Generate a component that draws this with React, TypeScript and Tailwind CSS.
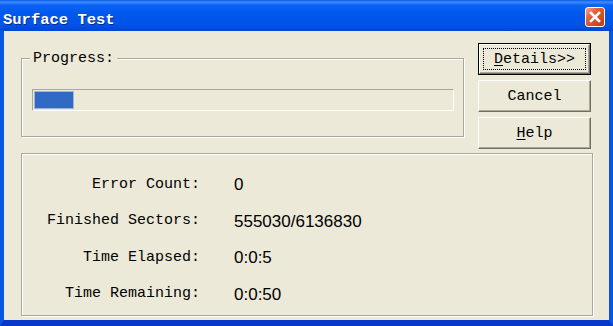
const mono = "font-['Liberation_Mono','Courier_New',monospace]"

interface BtnProps {
  label: string
  hotkey?: number
  isDefault?: boolean
}

const Btn = ({ label, hotkey, isDefault }: BtnProps) => {
  const text =
    hotkey === undefined ? (
      label
    ) : (
      <>
        {label.slice(0, hotkey)}
        <span className="underline underline-offset-2">{label[hotkey]}</span>
        {label.slice(hotkey + 1)}
      </>
    )

  const face = (
    <div className="relative flex h-full w-full items-center justify-center border border-t-white border-l-white border-r-[#716F64] border-b-[#716F64] bg-[#ECE9D8] shadow-[inset_-1px_-1px_0_#ACA899] leading-[18px]">
      {isDefault && <div className="absolute inset-[3px] border border-dotted border-black"></div>}
      <span className="pt-[2px]">{text}</span>
    </div>
  )

  if (isDefault) {
    return <div className="h-[32px] w-[113px] border border-black">{face}</div>
  }
  return <div className="h-[32px] w-[113px]">{face}</div>
}

const rows = [
  ['Error Count:', '0'],
  ['Finished Sectors:', '555030/6136830'],
  ['Time Elapsed:', '0:0:5'],
  ['Time Remaining:', '0:0:50'],
]

export default function App() {
  return (
    <div className={`flex h-[326px] w-[613px] flex-col overflow-hidden bg-[#0055E5] text-[15px] text-black ${mono}`}>
      {/* title bar */}
      <div className="flex h-[31px] items-center justify-between bg-[linear-gradient(to_bottom,#0A5CE8_0%,#3D8DFF_7%,#0A63F6_16%,#0057EC_45%,#0054E6_80%,#0046D0_100%)] pl-[3px] pr-[8px]">
        <span className="mt-[8px] text-[15.5px] font-bold leading-[18px] text-white [text-shadow:1px_1px_0_#0B2A8F]">Surface Test</span>
        <div className="mt-[2px] flex h-[20px] w-[20px] items-center justify-center rounded-[3px] border border-white bg-[linear-gradient(135deg,#F3A58A_0%,#E2603A_35%,#D44A22_70%,#B8361A_100%)]">
          <svg width="12" height="12" viewBox="0 0 12 12">
            <path d="M2 2 L10 10 M10 2 L2 10" stroke="#fff" strokeWidth="2.6" strokeLinecap="square" />
          </svg>
        </div>
      </div>

      {/* client area */}
      <div className="flex-1 border-x-4 border-b-[6px] border-x-[#0A56E4] border-b-[#0838C9] bg-[#ECE9D8]">
        <div className="flex pl-[17px] pt-[12px]">
          <div className="relative mt-[15px] h-[79px] w-[443px] border border-[#ACA899] shadow-[inset_1px_1px_0_#fff,1px_1px_0_#fff]">
            <span className="absolute left-[8px] top-[-9px] bg-[#ECE9D8] px-[3px] leading-[18px]">Progress:</span>
            <div className="ml-[10px] mt-[30px] flex h-[22px] w-[422px] border border-t-[#ACA899] border-l-[#ACA899] border-r-white border-b-white p-[2px]">
              <div className="h-full w-[38px] bg-[#316AC5] shadow-[0_0_0_1px_#9DB5DD]"></div>
            </div>
          </div>
          <div className="ml-[14px] flex flex-col gap-[5px]">
            <Btn label="Details>>" hotkey={0} isDefault />
            <Btn label="Cancel" />
            <Btn label="Help" hotkey={0} />
          </div>
        </div>

        <div className="ml-[17px] mt-[4px] h-[163px] w-[572px] border border-[#ACA899] pt-[13px] shadow-[inset_1px_1px_0_#fff,1px_1px_0_#fff]">
          <div className="grid grid-cols-[178px_auto] gap-x-[34px]">
            {rows.map(([k, v]) => (
              <div key={k} className="contents">
                <div className="flex h-[36.4px] items-center justify-end">{k}</div>
                <div className="flex h-[36.4px] items-center font-['Liberation_Sans',Arial,sans-serif] text-[17px]">{v}</div>
              </div>
            ))}
          </div>
        </div>
      </div>
    </div>
  )
}
